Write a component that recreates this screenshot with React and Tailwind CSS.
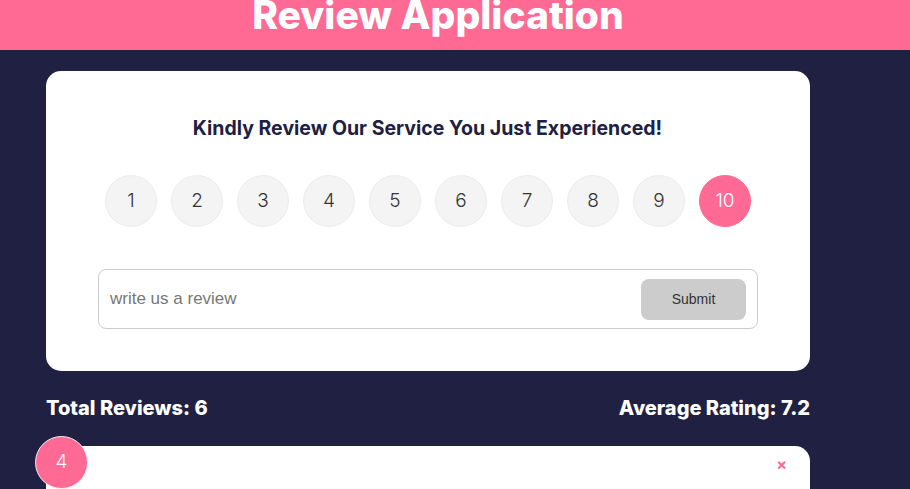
import React, { useState } from 'react';

const FONT = { fontFamily: 'Inter, "Noto Sans", sans-serif' };

function RatingSelect({ selected, onSelect }) {
  return (
    <ul className="flex justify-center gap-[14px] mt-[35px]">
      {Array.from({ length: 10 }, (_, i) => i + 1).map(n => (
        <li key={n}>
          <button
            onClick={() => onSelect(n)}
            className={`w-[52px] h-[52px] rounded-full flex items-center justify-center text-[19px] font-light border ${
              n === selected
                ? 'bg-[#ff6a95] border-[#ff6a95] text-white'
                : 'bg-[#f4f4f4] border-[#ececec] text-[#333]'
            }`}
          >
            {n}
          </button>
        </li>
      ))}
    </ul>
  );
}

export default function App() {
  const [rating, setRating] = useState(10);
  const [text, setText] = useState('');

  return (
    <div className="min-h-[489px] bg-[#202142] overflow-hidden" style={FONT}>
      {/* Header */}
      <header className="h-[50px] bg-[#ff6a95] overflow-hidden">
        <h1 className="text-white font-extrabold text-[39px] leading-none text-center pr-[34px] -mt-[5px]">
          Review Application
        </h1>
      </header>

      <div className="w-[764px] ml-[46px]">
        {/* Form card */}
        <div className="bg-white rounded-[15px] mt-[21px] h-[300px] pt-[45px]">
          <h2 className="text-center text-[19.5px] font-bold text-[#202142] leading-[24px] pr-[1px]">
            Kindly Review Our Service You Just Experienced!
          </h2>
          <RatingSelect selected={rating} onSelect={setRating} />
          <div className="mx-[52px] mt-[42px] h-[60px] border border-[#ccc] rounded-[8px] flex items-center pl-[11px] pr-[11px]">
            <input
              value={text}
              onChange={e => setText(e.target.value)}
              placeholder="write us a review"
              className="flex-1 outline-none text-[17px] text-[#333] placeholder:text-[#777]"
              style={{ fontFamily: '"Liberation Sans", Arial, sans-serif' }}
            />
            <button
              className="w-[105px] h-[41px] bg-[#ccc] rounded-[8px] text-[14px] text-[#333]"
              style={{ fontFamily: '"Liberation Sans", Arial, sans-serif' }}
            >
              Submit
            </button>
          </div>
        </div>

        {/* Stats */}
        <div className="flex justify-between text-white font-extrabold text-[20px] mt-[24px] leading-[26px]">
          <h4>Total Reviews: 6</h4>
          <h4>Average Rating: 7.2</h4>
        </div>

        {/* Review item */}
        <div className="relative bg-white rounded-[15px] mt-[25px] h-[120px]">
          <div className="absolute -left-[11px] -top-[10px] w-[53px] h-[53px] rounded-full bg-[#ff6a95] border border-[#eee] flex items-center justify-center text-white text-[19px] font-light">
            4
          </div>
          <button className="absolute right-[23px] top-[6px] text-[#ff6a95] text-[16px] font-bold">
            ×
          </button>
        </div>
      </div>
    </div>
  );
}
